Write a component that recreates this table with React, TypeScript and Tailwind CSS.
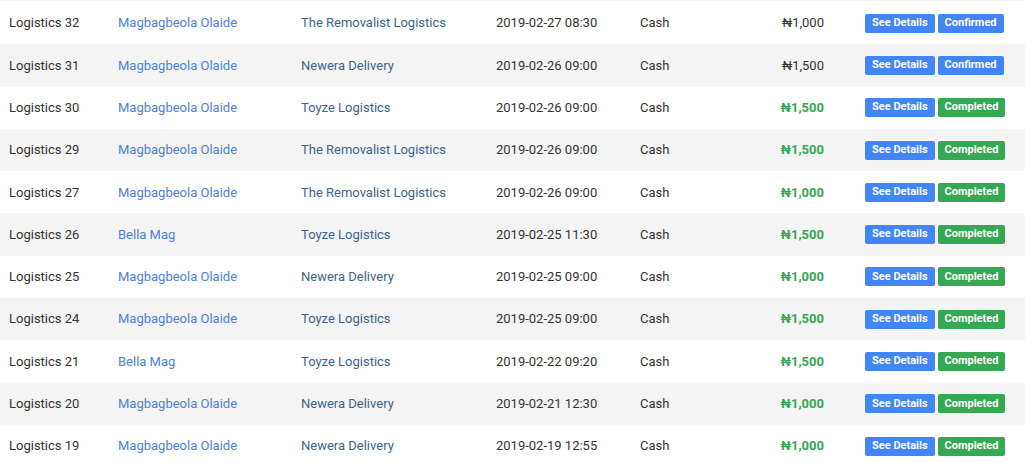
const rows = [
  { id: "Logistics 32", user: "Magbagbeola Olaide", company: "The Removalist Logistics", date: "2019-02-27 08:30", amount: "1,000", status: "Confirmed" },
  { id: "Logistics 31", user: "Magbagbeola Olaide", company: "Newera Delivery", date: "2019-02-26 09:00", amount: "1,500", status: "Confirmed" },
  { id: "Logistics 30", user: "Magbagbeola Olaide", company: "Toyze Logistics", date: "2019-02-26 09:00", amount: "1,500", status: "Completed" },
  { id: "Logistics 29", user: "Magbagbeola Olaide", company: "The Removalist Logistics", date: "2019-02-26 09:00", amount: "1,500", status: "Completed" },
  { id: "Logistics 27", user: "Magbagbeola Olaide", company: "The Removalist Logistics", date: "2019-02-26 09:00", amount: "1,000", status: "Completed" },
  { id: "Logistics 26", user: "Bella Mag", company: "Toyze Logistics", date: "2019-02-25 11:30", amount: "1,500", status: "Completed" },
  { id: "Logistics 25", user: "Magbagbeola Olaide", company: "Newera Delivery", date: "2019-02-25 09:00", amount: "1,000", status: "Completed" },
  { id: "Logistics 24", user: "Magbagbeola Olaide", company: "Toyze Logistics", date: "2019-02-25 09:00", amount: "1,500", status: "Completed" },
  { id: "Logistics 21", user: "Bella Mag", company: "Toyze Logistics", date: "2019-02-22 09:20", amount: "1,500", status: "Completed" },
  { id: "Logistics 20", user: "Magbagbeola Olaide", company: "Newera Delivery", date: "2019-02-21 12:30", amount: "1,000", status: "Completed" },
  { id: "Logistics 19", user: "Magbagbeola Olaide", company: "Newera Delivery", date: "2019-02-19 12:55", amount: "1,000", status: "Completed" },
];

export default function App() {
  return (
    <div className="w-[1025px] h-[463px] overflow-hidden bg-white border-t border-[#f3f3f3] pt-px font-['Roboto',sans-serif] text-[13px] text-[#333]">
      {rows.map((r, i) => {
        const done = r.status === "Completed";
        return (
          <div
            key={r.id}
            className={`grid grid-cols-[109px_183px_195px_144px_108px_94px_192px] items-center h-[42.3px] ${i % 2 === 1 ? "bg-[#f4f4f4]" : "bg-white"}`}
          >
            <div className="pl-[9px]">{r.id}</div>
            <div className="pl-[9px] text-[#4d82d6]">{r.user}</div>
            <div className="pl-[9px] text-[#3b6589]">{r.company}</div>
            <div className="pl-[9px]">{r.date}</div>
            <div className="pl-[9px]">Cash</div>
            <div className={`text-right pr-[9px] ${done ? "text-[#34a853] font-bold" : ""}`}>₦{r.amount}</div>
            <div className="flex gap-[3px] pl-[32px]">
              <span className="h-[19px] px-[7px] flex items-center rounded-[2px] bg-[#4285f4] text-white text-[11px] font-bold">See Details</span>
              <span className={`h-[19px] px-[7px] flex items-center rounded-[2px] text-white text-[11px] font-bold ${done ? "bg-[#34a853]" : "bg-[#4285f4]"}`}>{r.status}</span>
            </div>
          </div>
        );
      })}
    </div>
  );
}
